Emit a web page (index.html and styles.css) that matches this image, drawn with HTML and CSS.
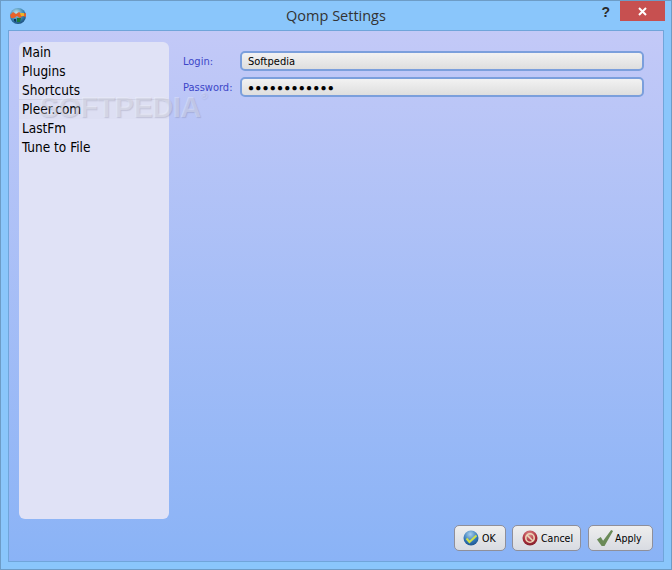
FILE: index.html
```html
<!DOCTYPE html>
<html lang="en">
<head>
  <meta charset="UTF-8" />
  <title>Qomp Settings</title>
  <link rel="stylesheet" href="styles.css">
</head>
<body>
  <div class="window">
    <div class="titlebar">
      <svg class="app-icon" width="18" height="18" viewBox="0 0 18 18">
        <defs>
          <radialGradient id="globe" cx="0.4" cy="0.3" r="0.8">
            <stop offset="0" stop-color="#bfe3e8"/>
            <stop offset="0.55" stop-color="#3c86b4"/>
            <stop offset="1" stop-color="#123f6e"/>
          </radialGradient>
        </defs>
        <circle cx="9" cy="9" r="8" fill="url(#globe)"/>
        <path d="M1 8 L4 5 L7 7 L10 5 L13 7 L17 6 L17 10 L14 9 L11 11 L8 9 L5 11 L2 11 Z" fill="#e8622a"/>
        <path d="M11 6 L15 6 L15 9 L12 9 Z" fill="#e8b42a"/>
        <path d="M8 11 L12 11 L11 15 L8 15 Z" fill="#1f7a38"/>
        <path d="M5 12 L7 12 L7 15 L5 14 Z" fill="#113a5c"/>
      </svg>
      <div class="title">Qomp Settings</div>
      <div class="help">?</div>
      <div class="close">
        <svg width="9" height="9" viewBox="0 0 9 9"><path d="M1 1 L8 8 M8 1 L1 8" stroke="#fff" stroke-width="2"/></svg>
      </div>
    </div>

    <div class="content">
      <div class="main">
        <ul class="menu">
          <li>Main</li>
          <li>Plugins</li>
          <li>Shortcuts</li>
          <li class="banded">Pleer.com</li>
          <li>LastFm</li>
          <li>Tune to File</li>
        </ul>

        <div class="form">
          <div class="row">
            <label>Login:</label>
            <div class="field">Softpedia</div>
          </div>
          <div class="row">
            <label>Password:</label>
            <div class="field dots">●●●●●●●●●●●●</div>
          </div>
        </div>
      </div>

      <div class="buttons">
        <button class="btn btn-ok">
          <svg width="16" height="16" viewBox="0 0 16 16">
            <defs>
              <radialGradient id="okball" cx="0.45" cy="0.25" r="0.85">
                <stop offset="0" stop-color="#a8d0ee"/>
                <stop offset="0.6" stop-color="#2f74b4"/>
                <stop offset="1" stop-color="#184a80"/>
              </radialGradient>
            </defs>
            <circle cx="8" cy="8" r="7.500" fill="url(#okball)"/>
            <path d="M3.500 8.500 L6.500 12 L13.500 5.500" fill="none" stroke="#cfe04a" stroke-width="2"/>
          </svg>
          OK
        </button>
        <button class="btn btn-cancel">
          <svg width="16" height="16" viewBox="0 0 16 16">
            <defs>
              <radialGradient id="noball" cx="0.45" cy="0.25" r="0.85">
                <stop offset="0" stop-color="#e08a8a"/>
                <stop offset="0.6" stop-color="#a82c3a"/>
                <stop offset="1" stop-color="#701c28"/>
              </radialGradient>
            </defs>
            <circle cx="8" cy="8" r="7.500" fill="url(#noball)"/>
            <circle cx="8" cy="8" r="4.200" fill="none" stroke="#ecd8b8" stroke-width="1.600"/>
            <path d="M5 5 L11 11" stroke="#ecd8b8" stroke-width="1.600"/>
          </svg>
          Cancel
        </button>
        <button class="btn btn-apply">
          <svg width="18" height="18" viewBox="0 0 19 19">
            <path d="M1 11 L5 8.500 L7.500 12.500 L16 1 L18 2 L9 18 L6 18 Z" fill="#6a8a58"/>
          </svg>
          Apply
        </button>
      </div>

      <div class="watermark">SOFTPEDIA<sup>®</sup></div>
    </div>
  </div>
</body>
</html>
```

FILE: styles.css
```css
* {
  margin: 0;
  padding: 0;
  box-sizing: border-box;
}

html, body {
  height: 100%;
  overflow: hidden;
}

body {
  font-family: 'DejaVu Sans Condensed', 'DejaVu Sans', sans-serif;
  background: #8ac6fb;
}

.window {
  height: 570px;
  display: flex;
  flex-direction: column;
  background: #8ac6fb;
  border: 1px solid #6d9cc6;
  padding: 0 7px 7px;
}

.titlebar {
  height: 29px;
  flex: none;
  display: flex;
  align-items: flex-start;
  position: relative;
}

.app-icon {
  position: absolute;
  left: 1px;
  top: 6px;
}

.title {
  flex: 1;
  text-align: center;
  font-family: 'Open Sans', sans-serif;
  font-size: 14.500px;
  line-height: 30px;
  color: #333;
}

.help {
  position: absolute;
  right: 54px;
  top: 3px;
  font-family: 'Liberation Sans', sans-serif;
  font-size: 14px;
  font-weight: bold;
  color: #2b2b2b;
}

.close {
  position: absolute;
  right: -1px;
  top: 0;
  width: 45px;
  height: 20px;
  background: #c75050;
  display: flex;
  align-items: center;
  justify-content: center;
}

.content {
  flex: 1;
  display: flex;
  flex-direction: column;
  position: relative;
  background: linear-gradient(180deg, #c3c9f7 0%, #8ab3f6 100%);
  border: 1px solid #70a5da;
  padding: 11px 10px 10px 10px;
}

.main {
  flex: 1;
  display: flex;
  min-height: 0;
}

.menu {
  width: 150px;
  height: 477px;
  flex: none;
  list-style: none;
  background: #e0e2f6;
  border-radius: 6px;
  padding: 1px 0;
}

.menu li {
  font-size: 13.500px;
  line-height: 19px;
  padding-left: 3px;
  color: #000;
}

.menu .banded {
  background: #dddff3;
  box-shadow: 0 -1px 0 #d0d2e6;
}

.form {
  flex: 1;
  padding: 9px 9px 0 14px;
  display: flex;
  flex-direction: column;
  gap: 6px;
}

.row {
  display: flex;
  align-items: center;
  gap: 7px;
}

.row label {
  width: 50px;
  font-size: 11px;
  color: #3c46c8;
}

.field {
  flex: 1;
  height: 20px;
  border: 2px solid #7b9fdc;
  border-radius: 5px;
  background: linear-gradient(180deg, #f2f2f2, #dedede);
  font-size: 11px;
  line-height: 18px;
  padding-left: 6px;
  color: #000;
}

.dots {
  font-family: 'Liberation Sans', sans-serif;
  font-size: 10px;
  letter-spacing: 1.200px;
}

.buttons {
  display: flex;
  justify-content: flex-end;
  gap: 6px;
}

.btn {
  height: 26px;
  display: flex;
  align-items: center;
  gap: 3px;
  border: 1px solid #8f8f9a;
  border-radius: 5px;
  background: linear-gradient(180deg, #eeeeee, #d8dbe2);
  font-family: 'DejaVu Sans Condensed', 'DejaVu Sans', sans-serif;
  font-size: 10.500px;
  color: #000;
  padding: 0 8px;
}

.btn svg {
  flex: none;
}

.btn-ok { width: 52px; }
.btn-cancel { width: 69px; margin-right: 1px; padding-left: 9px; }
.btn-apply { width: 65px; padding-left: 7px; gap: 1px; }

.watermark {
  position: absolute;
  left: 30px;
  top: 60px;
  font-family: 'Liberation Sans', sans-serif;
  font-size: 29px;
  font-weight: bold;
  letter-spacing: -0.500px;
  color: rgba(255, 255, 255, 0.3);
  text-shadow: 1px 1px 1px rgba(90, 90, 120, 0.2);
  pointer-events: none;
}

.watermark sup {
  font-size: 9px;
  font-weight: normal;
  vertical-align: top;
}
```
